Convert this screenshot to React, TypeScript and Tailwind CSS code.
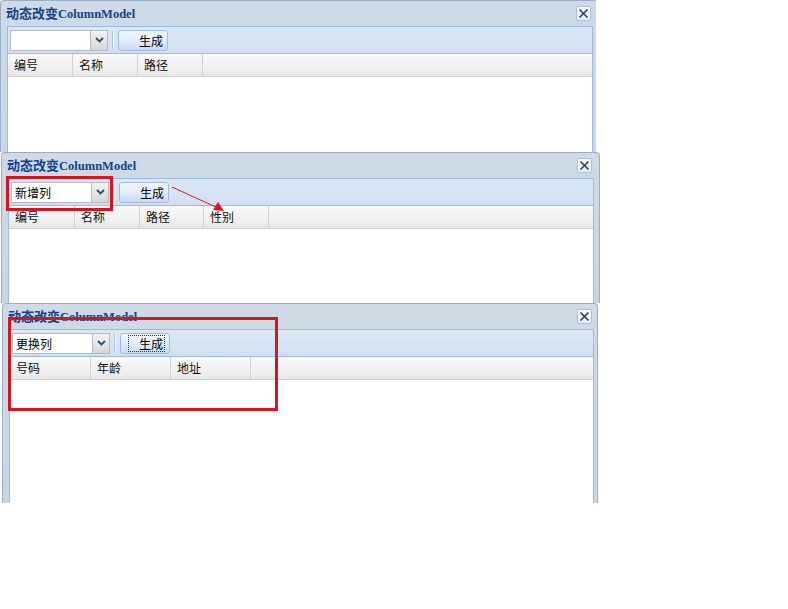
import React from 'react';

type Col = { label: string; w: number };

type PanelProps = {
  comboText: string;
  cols: Col[];
  focused?: boolean;
  outerClass: string;
  bodyClass: string;
};

const cjk = { fontFamily: '"Noto Sans CJK SC", "Liberation Sans", sans-serif' };
const title = { fontFamily: '"Liberation Serif", "Noto Sans CJK SC", serif' };

function CloseBtn() {
  return (
    <div className="w-[15px] h-[15px] border border-[#a9c0dd] rounded-[2px] bg-gradient-to-b from-[#ffffff] to-[#e3ecf7] flex items-center justify-center">
      <svg width="11" height="11" viewBox="0 0 11 11">
        <path d="M1.5 1.5 L9.5 9.5 M9.5 1.5 L1.5 9.5" stroke="#1f3f6a" strokeWidth="1.6" />
      </svg>
    </div>
  );
}

function Combo({ text }: { text: string }) {
  return (
    <div className="flex h-[21px] w-[98px] border border-[#b5b8c8] bg-white">
      <div className="flex-1 px-[3px] text-[12px] leading-[19px] text-black" style={cjk}>
        {text}
      </div>
      <div className="w-[17px] border-l border-[#b5b8c8] bg-gradient-to-b from-[#f4f4f4] to-[#d6d6d6] flex items-center justify-center">
        <svg width="9" height="6" viewBox="0 0 9 6">
          <path d="M1 1 L4.5 4.5 L8 1" stroke="#2a4d7a" strokeWidth="1.8" fill="none" />
        </svg>
      </div>
    </div>
  );
}

function GenBtn({ focused }: { focused?: boolean }) {
  return (
    <div className="h-[21px] w-[50px] border border-[#9fbde4] rounded-[3px] bg-gradient-to-b from-[#f2f7fd] via-[#e2ecf9] to-[#c6dbf4] flex items-center justify-end pr-[4px]">
      <span
        className={
          focused
            ? 'text-[12px] leading-[15px] text-black border border-dotted border-[#333] pl-[10px] pr-[1px]'
            : 'text-[12px] leading-[15px] text-black'
        }
        style={cjk}
      >
        生成
      </span>
    </div>
  );
}

function Panel({ comboText, cols, focused, outerClass, bodyClass }: PanelProps) {
  return (
    <div className={outerClass}>
      {/* HEADER */}
      <div className="h-[25px] flex items-center justify-between -ml-[1px] pr-[2px] shrink-0">
        <span className="text-[13px] font-bold text-[#15428b]" style={title}>
          动态改变<span className="text-[12.5px]">ColumnModel</span>
        </span>
        <CloseBtn />
      </div>

      {/* BODY */}
      <div className={bodyClass}>
        <div className="h-[27px] shrink-0 bg-gradient-to-b from-[#dce8f6] to-[#d0dff1] border-b border-[#99bbe8] flex items-center pl-[2px]">
          <Combo text={comboText} />
          <div className="w-[2px] h-[18px] border-l border-[#a8c0de] border-r border-r-white ml-[4px] mr-[4px]" />
          <GenBtn focused={focused} />
        </div>

        <div className="h-[23px] shrink-0 flex bg-gradient-to-b from-[#fbfbfb] to-[#e8e8e8] border-b border-[#d0d0d0]">
          {cols.map((c) => (
            <div
              key={c.label}
              className="h-full border-r border-[#d0d0d0] pl-[6px] text-[12px] leading-[22px] text-[#111]"
              style={{ width: c.w, ...cjk }}
            >
              {c.label}
            </div>
          ))}
        </div>

        <div className="flex-1 bg-white" />
      </div>
    </div>
  );
}

export default function App() {
  return (
    <div className="relative w-[788px] h-[609px] bg-white overflow-hidden">
      {/* PANEL 1 */}
      <Panel
        comboText=""
        cols={[
          { label: '编号', w: 65 },
          { label: '名称', w: 65 },
          { label: '路径', w: 65 },
        ]}
        outerClass="w-[596px] h-[152px] flex flex-col bg-gradient-to-b from-[#cfdae6] to-[#c7d5e6] border-t border-l border-[#99aecb] rounded-tl-[4px] pl-[6px] pr-[3px] overflow-hidden"
        bodyClass="flex-1 flex flex-col border-t border-l border-r border-[#99bbe8] bg-white"
      />

      {/* PANEL 2 */}
      <Panel
        comboText="新增列"
        cols={[
          { label: '编号', w: 66 },
          { label: '名称', w: 65 },
          { label: '路径', w: 64 },
          { label: '性别', w: 65 },
        ]}
        outerClass="ml-[1px] w-[599px] h-[151px] flex flex-col bg-gradient-to-b from-[#cfdae6] to-[#c7d5e6] border-t border-l border-r border-[#99aecb] rounded-t-[4px] pl-[6px] pr-[5px] overflow-hidden"
        bodyClass="flex-1 flex flex-col border-t border-l border-r border-[#99bbe8] bg-white"
      />

      {/* PANEL 3 */}
      <Panel
        comboText="更换列"
        focused
        cols={[
          { label: '号码', w: 81 },
          { label: '年龄', w: 80 },
          { label: '地址', w: 80 },
        ]}
        outerClass="ml-[2px] w-[596px] h-[200px] flex flex-col bg-gradient-to-b from-[#cfdae6] to-[#c7d5e6] border-t border-l border-r border-[#99aecb] rounded-t-[4px] pl-[6px] pr-[3px] overflow-hidden"
        bodyClass="flex-1 flex flex-col border-t border-l border-r border-[#99bbe8] bg-white"
      />

      {/* ANNOTATIONS */}
      <div className="absolute left-[6px] top-[176px] w-[107px] h-[35px] border-[3px] border-[#d9141c]" />
      <div className="absolute left-[8px] top-[317px] w-[270px] h-[94px] border-[3px] border-[#d9141c]" />
      <svg className="absolute left-0 top-0" width="788" height="609">
        <line x1="172" y1="187" x2="218" y2="208" stroke="#e0141c" strokeWidth="1" />
        <polygon points="224,211 213,210 218,202" fill="#e0141c" />
      </svg>
    </div>
  );
}
